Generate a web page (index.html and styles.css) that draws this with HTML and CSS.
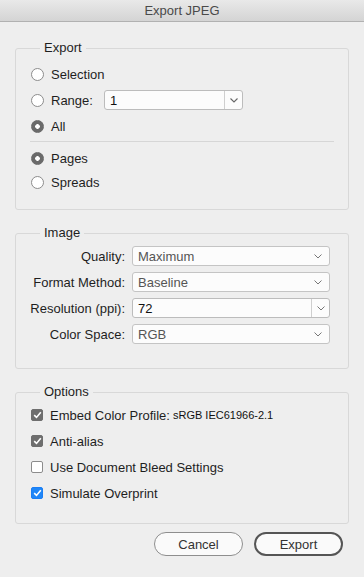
FILE: index.html
```html
<!DOCTYPE html>
<html>
  <head>
    <link rel="stylesheet" href="styles.css">
    <title>Export JPEG</title>
  </head>
  <body>
    <div class="title-bar">Export JPEG</div>

    <div class="dialog-body">
      <fieldset class="group group-export">
        <legend>Export</legend>
        <label class="row">
          <span class="radio"></span>
          <span>Selection</span>
        </label>
        <div class="row">
          <span class="radio"></span>
          <span class="range-label">Range:</span>
          <div class="combo range-combo">
            <span class="combo-value">1</span>
            <span class="combo-btn">
              <svg width="8" height="5" viewBox="0 0 8 5"><polyline points="0.5,0.5 4,4 7.5,0.5" fill="none" stroke="#666" stroke-width="1.1"/></svg>
            </span>
          </div>
        </div>
        <label class="row">
          <span class="radio checked"></span>
          <span>All</span>
        </label>
        <div class="separator"></div>
        <label class="row row-small">
          <span class="radio checked"></span>
          <span>Pages</span>
        </label>
        <label class="row row-small">
          <span class="radio"></span>
          <span>Spreads</span>
        </label>
      </fieldset>

      <fieldset class="group group-image">
        <legend>Image</legend>
        <div class="form-grid">
          <span class="field-label">Quality:</span>
          <div class="select">
            <span class="select-value">Maximum</span>
            <svg width="8" height="5" viewBox="0 0 8 5"><polyline points="0.5,0.5 4,4 7.5,0.5" fill="none" stroke="#777" stroke-width="1"/></svg>
          </div>

          <span class="field-label">Format Method:</span>
          <div class="select">
            <span class="select-value">Baseline</span>
            <svg width="8" height="5" viewBox="0 0 8 5"><polyline points="0.5,0.5 4,4 7.5,0.5" fill="none" stroke="#777" stroke-width="1"/></svg>
          </div>

          <span class="field-label">Resolution (ppi):</span>
          <div class="combo">
            <span class="combo-value">72</span>
            <span class="combo-btn">
              <svg width="8" height="5" viewBox="0 0 8 5"><polyline points="0.5,0.5 4,4 7.5,0.5" fill="none" stroke="#777" stroke-width="1"/></svg>
            </span>
          </div>

          <span class="field-label">Color Space:</span>
          <div class="select">
            <span class="select-value">RGB</span>
            <svg width="8" height="5" viewBox="0 0 8 5"><polyline points="0.5,0.5 4,4 7.5,0.5" fill="none" stroke="#777" stroke-width="1"/></svg>
          </div>
        </div>
      </fieldset>

      <fieldset class="group group-options">
        <legend>Options</legend>
        <label class="row">
          <span class="check checked-gray">
            <svg width="9" height="8" viewBox="0 0 9 8"><polyline points="1.2,4.2 3.5,6.4 7.8,1.3" fill="none" stroke="#fff" stroke-width="1.6"/></svg>
          </span>
          <span>Embed Color Profile:</span>
          <span class="profile-name">sRGB IEC61966-2.1</span>
        </label>
        <label class="row">
          <span class="check checked-gray">
            <svg width="9" height="8" viewBox="0 0 9 8"><polyline points="1.2,4.2 3.5,6.4 7.8,1.3" fill="none" stroke="#fff" stroke-width="1.6"/></svg>
          </span>
          <span>Anti-alias</span>
        </label>
        <label class="row">
          <span class="check"></span>
          <span>Use Document Bleed Settings</span>
        </label>
        <label class="row">
          <span class="check checked-blue">
            <svg width="9" height="8" viewBox="0 0 9 8"><polyline points="1.2,4.2 3.5,6.4 7.8,1.3" fill="none" stroke="#fff" stroke-width="1.6"/></svg>
          </span>
          <span>Simulate Overprint</span>
        </label>
      </fieldset>

      <div class="button-row">
        <button class="btn">Cancel</button>
        <button class="btn btn-default">Export</button>
      </div>
    </div>
  </body>
</html>
```

FILE: styles.css
```css
body {
  margin: 0;
  background: #eeeeee;
  font-family: "Liberation Sans", Arial, sans-serif;
  font-size: 13px;
  color: #1e1e1e;
}

.title-bar {
  height: 21px;
  line-height: 21px;
  text-align: center;
  color: #4a4a4a;
  background: linear-gradient(to bottom, #e9e9e9, #d4d4d4);
  border-bottom: 1px solid #b1b1b1;
}

.dialog-body {
  display: flex;
  flex-direction: column;
  padding: 18px 15px 0 15px;
}

.group {
  margin: 0;
  border: 1px solid #d8d8d8;
  border-radius: 3px;
  padding: 0 14px;
}

.group legend {
  margin-left: 10px;
  padding: 0 4px;
  line-height: 16px;
}

.group-export {
  padding-top: 5px;
  padding-bottom: 15px;
}

.group-image {
  margin-top: 15px;
  padding-top: 5px;
  padding-bottom: 24px;
}

.group-options {
  margin-top: 15px;
  padding-top: 2px;
  padding-bottom: 17px;
}

.row {
  display: flex;
  align-items: center;
  height: 26px;
}

.row-small {
  height: 24px;
}

.radio {
  box-sizing: border-box;
  width: 13px;
  height: 13px;
  margin: 0 7px 0 1px;
  border: 1px solid #8c8c8c;
  border-radius: 50%;
  background: #fff;
  flex-shrink: 0;
}

.radio.checked {
  border-color: #6a6a6a;
  background: radial-gradient(circle, #fff 0, #fff 2px, #6a6a6a 2.6px);
}

.range-label {
  width: 53px;
}

.separator {
  height: 1px;
  background: #d6d6d6;
  margin: 2px 0 4px 0;
}

.combo {
  display: flex;
  align-items: center;
  box-sizing: border-box;
  height: 20px;
  border: 1px solid #bcbcbc;
  border-radius: 3px;
  background: #fcfcfc;
  color: #111;
}

.range-combo {
  width: 139px;
}

.combo-value {
  flex: 1;
  padding-left: 5px;
}

.combo-btn {
  display: flex;
  align-items: center;
  justify-content: center;
  width: 17px;
  height: 100%;
  border-left: 1px solid #cfcfcf;
}

.form-grid {
  display: grid;
  grid-template-columns: 95px 198px;
  column-gap: 7px;
  row-gap: 6px;
  align-items: center;
}

.field-label {
  text-align: right;
}

.select {
  display: flex;
  align-items: center;
  box-sizing: border-box;
  height: 20px;
  padding: 0 7px 0 5px;
  border: 1px solid #c4c4c4;
  border-radius: 3px;
  background: #fcfcfc;
  color: #555;
}

.select-value {
  flex: 1;
}

.check {
  box-sizing: border-box;
  display: flex;
  align-items: center;
  justify-content: center;
  width: 12px;
  height: 12px;
  margin: 0 7px 0 1px;
  border: 1px solid #8c8c8c;
  border-radius: 2px;
  background: #fff;
  flex-shrink: 0;
}

.check.checked-gray {
  border-color: #6e6e6e;
  background: #6e6e6e;
}

.check.checked-blue {
  border-color: #1a7ef5;
  background: #1f86f7;
}

.profile-name {
  margin-left: 3px;
  font-size: 11px;
  color: #111;
}

.button-row {
  display: flex;
  justify-content: flex-end;
  gap: 11px;
  padding: 8px 6px 0 0;
}

.btn {
  box-sizing: border-box;
  width: 89px;
  height: 24px;
  border: 1px solid #8e8e8e;
  border-radius: 12px;
  background: #fafafa;
  font-family: inherit;
  font-size: 13px;
  color: #333;
}

.btn-default {
  border: 2px solid #555;
}
```
